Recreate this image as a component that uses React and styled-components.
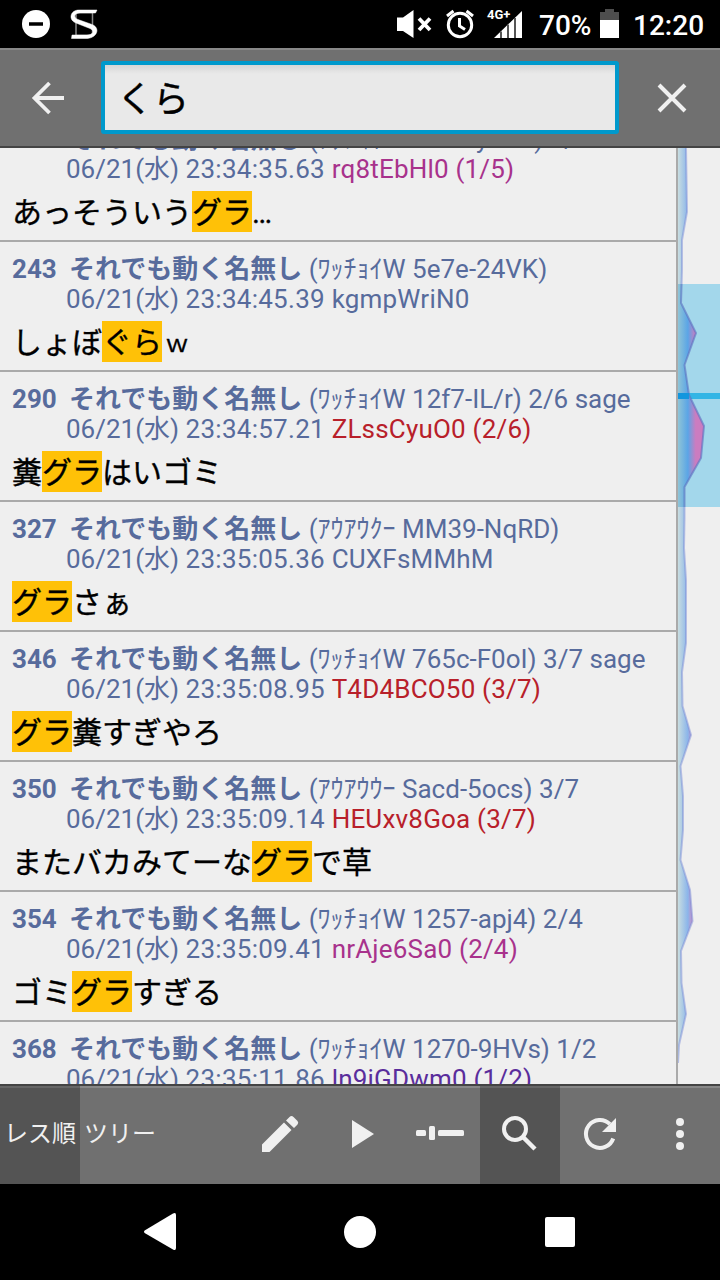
import styled, { createGlobalStyle } from 'styled-components'

const GlobalStyle = createGlobalStyle`
  * {
    box-sizing: border-box;
  }

  body {
    margin: 0;
    background: #000;
    font-family: Roboto, 'Noto Sans CJK JP', sans-serif;
  }
`

const Screen = styled.div`
  width: 720px;
  height: 1280px;
  display: flex;
  flex-direction: column;
  overflow: hidden;
  background: #efefef;
`

const StatusBar = styled.header`
  height: 48px;
  flex: none;
  display: flex;
  align-items: center;
  background: #000;
  color: #fff;
  font-size: 28px;
  font-weight: 500;
  line-height: 48px;
`

const StatusIcon = styled.svg`
  width: ${({ $width }) => $width}px;
  height: 48px;
  flex: none;
`

const StatusText = styled.span`
  width: ${({ $width }) => $width}px;
  padding-top: 3px;
  white-space: nowrap;
`

const SearchBar = styled.div`
  height: 100px;
  flex: none;
  display: flex;
  align-items: flex-start;
  padding-top: 11px;
  background: #707070;
  border-top: 2px solid #888;
  border-bottom: 2px solid #444;
`

const SearchInput = styled.div`
  width: 518px;
  height: 73px;
  padding-left: 12px;
  border: 4px solid #0099cc;
  border-radius: 3px;
  background: linear-gradient(#d6d6d6, #e9e9e9 9px);
  color: #000;
  font-size: 36px;
  line-height: 70px;
  -webkit-text-stroke: 0.4px #000;
`

const IconButton = styled.button`
  width: ${({ $width }) => $width}px;
  height: 73px;
  padding: 0;
  border: 0;
  background: none;

  svg {
    display: block;
  }
`

const Content = styled.main`
  height: 936px;
  flex: none;
  display: flex;
  overflow: hidden;
`

const PostList = styled.div`
  width: 678px;
  height: 936px;
  overflow: hidden;
  display: flex;
  flex-direction: column;
  border-right: 2px solid #aaa;
`

const Post = styled.article`
  height: 130px;
  flex: none;
  padding: 12px 0 0 12px;
  border-bottom: 2px solid #aaa;
  white-space: pre;

  &:first-child {
    margin-top: -36px;
  }
`

const PostMeta = styled.div`
  height: 30px;
  padding-left: ${({ $indent }) => ($indent ? 54 : 0)}px;
  color: #576b9c;
  font-size: 26px;
  line-height: 30px;
`

const PostNumber = styled.b`
  display: inline-block;
  width: 57px;
`

const PostTime = styled.span`
  letter-spacing: 0.27px;
`

const PosterId = styled.span`
  color: ${({ $color }) => $color || 'inherit'};
  letter-spacing: 0.2px;
`

const PostBody = styled.p`
  height: 41px;
  margin: 7px 0 0;
  display: flex;
  color: #000;
  font-size: 30px;
  line-height: 43px;
  -webkit-text-stroke: 0.35px #000;
`

const Hit = styled.mark`
  background: #ffc107;
  color: inherit;
`

const Laugh = styled.span`
  width: 30px;
  padding-top: 2px;
  font-size: 24px;
  text-align: center;
`

const MiniMap = styled.svg`
  width: 42px;
  height: 936px;
  display: block;
`

const Toolbar = styled.nav`
  height: 100px;
  flex: none;
  display: flex;
  background: #707070;
  border-top: 2px solid #444;
  box-shadow: inset 0 2px #888;
`

const Tool = styled.button`
  width: 80px;
  height: 98px;
  padding: 0;
  border: 0;
  background: ${({ $active }) => ($active ? '#545454' : 'none')};
  box-shadow: ${({ $active }) => ($active ? 'inset 0 2px #666' : 'none')};
  color: #f0f0f0;
  font: 24px/94px Roboto, 'Noto Sans CJK JP', sans-serif;
  white-space: nowrap;

  svg {
    display: block;
  }
`

const ToolLabel = styled.span`
  display: block;
  padding-bottom: 2px;
`

const Spacer = styled.div`
  flex: 1;
`

const NavBar = styled.footer`
  height: 96px;
  flex: none;
  display: flex;
  justify-content: center;
  gap: 120px;
  background: #000;

  svg {
    width: 80px;
    height: 96px;
    fill: #fff;
  }
`

const pink = '#a8328c'
const red = '#b8202a'
const purple = '#5a2d9c'

const posts = [
  { no: '240', host: '(ﾜｯﾁｮｲW 5e6e-yJU8) 1/5', time: '23:34:35.63', id: 'rq8tEbHl0 (1/5)', color: pink, body: ['あっそういう', 'グラ', '…'] },
  { no: '243', host: '(ﾜｯﾁｮｲW 5e7e-24VK)', time: '23:34:45.39', id: 'kgmpWriN0', body: ['しょぼ', 'ぐら', ''], laugh: true },
  { no: '290', host: '(ﾜｯﾁｮｲW 12f7-IL/r) 2/6 sage', time: '23:34:57.21', id: 'ZLssCyuO0 (2/6)', color: red, body: ['糞', 'グラ', 'はいゴミ'] },
  { no: '327', host: '(ｱｳｱｳｸｰ MM39-NqRD)', time: '23:35:05.36', id: 'CUXFsMMhM', body: ['', 'グラ', 'さぁ'] },
  { no: '346', host: '(ﾜｯﾁｮｲW 765c-F0oI) 3/7 sage', time: '23:35:08.95', id: 'T4D4BCO50 (3/7)', color: red, body: ['', 'グラ', '糞すぎやろ'] },
  { no: '350', host: '(ｱｳｱｳｳｰ Sacd-5ocs) 3/7', time: '23:35:09.14', id: 'HEUxv8Goa (3/7)', color: red, body: ['またバカみてーな', 'グラ', 'で草'] },
  { no: '354', host: '(ﾜｯﾁｮｲW 1257-apj4) 2/4', time: '23:35:09.41', id: 'nrAje6Sa0 (2/4)', color: pink, body: ['ゴミ', 'グラ', 'すぎる'] },
  { no: '368', host: '(ﾜｯﾁｮｲW 1270-9HVs) 1/2', time: '23:35:11.86', id: 'ln9iGDwm0 (1/2)', color: purple, body: ['', '', ''] },
]

const PostRow = ({ post }) => (
  <Post>
    <PostMeta>
      <PostNumber>{post.no}</PostNumber>
      <b>それでも動く名無し</b> {post.host}
    </PostMeta>
    <PostMeta $indent>
      06/21(水) <PostTime>{post.time} </PostTime>
      <PosterId $color={post.color}>{post.id}</PosterId>
    </PostMeta>
    <PostBody>
      <span>{post.body[0]}</span>
      <Hit>{post.body[1]}</Hit>
      <span>{post.body[2]}</span>
      {post.laugh && <Laugh>ｗ</Laugh>}
    </PostBody>
  </Post>
)

// posting rate, [width, y] from the top of the list
const rate = [
  [8, 0], [9, 64], [4, 92], [4, 122], [3, 155], [18, 185], [6.5, 217], [11, 247],
  [26, 278], [23, 310], [6.5, 339], [6.5, 370], [6, 400], [8, 432], [8, 495], [4, 524],
  [4.5, 558], [13, 587], [2.5, 618], [5, 648], [5, 682], [2.5, 712], [12, 742], [14.5, 773],
  [3, 803], [3.5, 835], [8, 866], [1, 897], [0, 915],
]

const RateMap = () => {
  const line = rate.map((p) => p.join(',')).join(' ')
  return (
    <MiniMap viewBox="0 0 42 936">
      <defs>
        <linearGradient id="rate" gradientUnits="userSpaceOnUse" x1="0" y1="0" x2="26" y2="0">
          <stop offset="0" stopColor="#c8dde0" />
          <stop offset="0.38" stopColor="#8bb5ea" />
          <stop offset="0.6" stopColor="#d583c0" />
          <stop offset="1" stopColor="#d583c0" />
        </linearGradient>
        <linearGradient id="rateInView" gradientUnits="userSpaceOnUse" x1="0" y1="0" x2="26" y2="0">
          <stop offset="0" stopColor="#8fc4d6" />
          <stop offset="0.38" stopColor="#5ba5e6" />
          <stop offset="0.68" stopColor="#cb7cc0" />
          <stop offset="1" stopColor="#cb7cc0" />
        </linearGradient>
        <clipPath id="inView">
          <rect y="136" width="42" height="223" />
        </clipPath>
      </defs>
      <polygon points={`0,0 ${line}`} fill="url(#rate)" />
      <polyline points={line} fill="none" stroke="#7c8ed8" strokeOpacity="0.5" strokeWidth="2" />
      <g clipPath="url(#inView)">
        <rect y="136" width="42" height="223" fill="#a3d7eb" />
        <rect y="245" width="42" height="6" fill="#33b5e5" />
        <polygon points={`0,0 ${line}`} fill="url(#rateInView)" />
        <polyline points={line} fill="none" stroke="#5a6fc0" strokeOpacity="0.6" strokeWidth="2" />
        <rect y="245" width="11" height="6" fill="#1296de" />
      </g>
    </MiniMap>
  )
}

const App = () => (
  <>
    <GlobalStyle />
    <Screen>
      <StatusBar>
        <StatusIcon $width={390} viewBox="0 0 390 48">
          <circle cx="36" cy="24" r="14" fill="#fff" />
          <path d="M29 24H43" stroke="#000" strokeWidth="3.500" />
          <path d="M76 12.5H92.500V35.5H76Z" fill="none" stroke="#888" strokeWidth="1.5" />
          <path
            d="M97 10H79C70 10 68 20 76 23L90 28.500C95 31 93 35 87 35H72L71.500 38.500H86C97 38.500 101 28 92 24.500L78 19.500C73 17.500 74 13 80 13H95.500Z"
            fill="#fff"
            stroke="#fff"
            strokeWidth="0.500"
          />
        </StatusIcon>
        <StatusIcon $width={149} viewBox="390 0 149 48">
          <path d="M397 17.5H403L413.500 10V38L403 31H397Z" fill="#fff" />
          <path d="M419 18.500L430 30M430 18.500L419 30" stroke="#fff" strokeWidth="3.800" />
          <circle cx="460" cy="25" r="11.700" fill="none" stroke="#fff" strokeWidth="3" />
          <path d="M459.500 18V26L465 29.500M447 16L453.500 11M473 16L466.500 11" fill="none" stroke="#fff" strokeWidth="3" />
          <path d="M494 38L522 11V38Z" fill="#fff" />
          <path d="M501 31.500V38M508 24.500V38M515 18V38" stroke="#555" strokeWidth="2" />
          <text x="487" y="18.500" fill="#fff" fontSize="13" fontWeight="700">4G+</text>
        </StatusIcon>
        <StatusText $width={61}>70%</StatusText>
        <StatusIcon $width={33} viewBox="600 0 33 48">
          <path d="M600 12H605V9H614V12H619V20H600Z" fill="#4d4d4d" />
          <path d="M600 20H619V38H600Z" fill="#fff" />
        </StatusIcon>
        <StatusText $width={87}>12:20</StatusText>
      </StatusBar>

      <SearchBar>
        <IconButton $width={101} aria-label="戻る">
          <svg width="101" height="73" viewBox="0 61 101 73">
            <path d="M64 98H34M49.500 83L34.500 98L49.500 113" fill="none" stroke="#f0f0f0" strokeWidth="3.800" />
          </svg>
        </IconButton>
        <SearchInput>くら</SearchInput>
        <IconButton $width={101} aria-label="閉じる">
          <svg width="101" height="73" viewBox="619 61 101 73">
            <path d="M659 85L685 111M685 85L659 111" stroke="#f0f0f0" strokeWidth="4" />
          </svg>
        </IconButton>
      </SearchBar>

      <Content>
        <PostList>
          {posts.map((post) => (
            <PostRow key={post.no} post={post} />
          ))}
        </PostList>
        <RateMap />
      </Content>

      <Toolbar>
        <Tool $active>
          <ToolLabel>レス順</ToolLabel>
        </Tool>
        <Tool>
          <ToolLabel>ツリー</ToolLabel>
        </Tool>
        <Spacer />
        <Tool aria-label="書き込み">
          <svg width="80" height="98" viewBox="240 1086 80 98" fill="#f0f0f0">
            <path d="M262 1144.500L284 1122.500L291.500 1130L269.500 1152H262ZM286 1120.500L289.500 1117Q291.500 1115 293.500 1117L297.500 1121Q299 1122.500 297.500 1124.500L294 1128Z" />
          </svg>
        </Tool>
        <Tool aria-label="再生">
          <svg width="80" height="98" viewBox="320 1086 80 98" fill="#f0f0f0">
            <path d="M352 1120L374 1134L352 1148Z" />
          </svg>
        </Tool>
        <Tool aria-label="位置">
          <svg width="80" height="98" viewBox="400 1086 80 98" fill="#f0f0f0">
            <rect x="416" y="1130" width="10" height="6" rx="1.500" />
            <rect x="429" y="1126" width="6" height="14" rx="1.500" />
            <rect x="438" y="1130" width="26" height="6" rx="1.500" />
          </svg>
        </Tool>
        <Tool $active aria-label="検索">
          <svg width="80" height="98" viewBox="480 1086 80 98" fill="none" stroke="#f0f0f0">
            <circle cx="515" cy="1129" r="11" strokeWidth="4" />
            <path d="M523 1137L535 1149" strokeWidth="4.500" />
          </svg>
        </Tool>
        <Tool aria-label="更新">
          <svg width="80" height="98" viewBox="560 1086 80 98">
            <path d="M609.900 1124.100A14 14 0 1 0 613.200 1138.500" fill="none" stroke="#f0f0f0" strokeWidth="4" />
            <path d="M616 1118V1132H602Z" fill="#f0f0f0" />
          </svg>
        </Tool>
        <Tool aria-label="メニュー">
          <svg width="80" height="98" viewBox="640 1086 80 98" fill="#f0f0f0">
            <circle cx="680" cy="1122" r="4" />
            <circle cx="680" cy="1134" r="4" />
            <circle cx="680" cy="1146" r="4" />
          </svg>
        </Tool>
      </Toolbar>

      <NavBar>
        <svg viewBox="120 1184 80 96">
          <path d="M144.600 1230.500L173 1213.500Q176 1212 176 1215V1248Q176 1251 173 1249.500L144.600 1233Q143.300 1231.700 144.600 1230.500Z" />
        </svg>
        <svg viewBox="320 1184 80 96">
          <circle cx="360" cy="1232" r="16" />
        </svg>
        <svg viewBox="520 1184 80 96">
          <rect x="545" y="1217" width="30" height="30" rx="2" />
        </svg>
      </NavBar>
    </Screen>
  </>
)

export default App
